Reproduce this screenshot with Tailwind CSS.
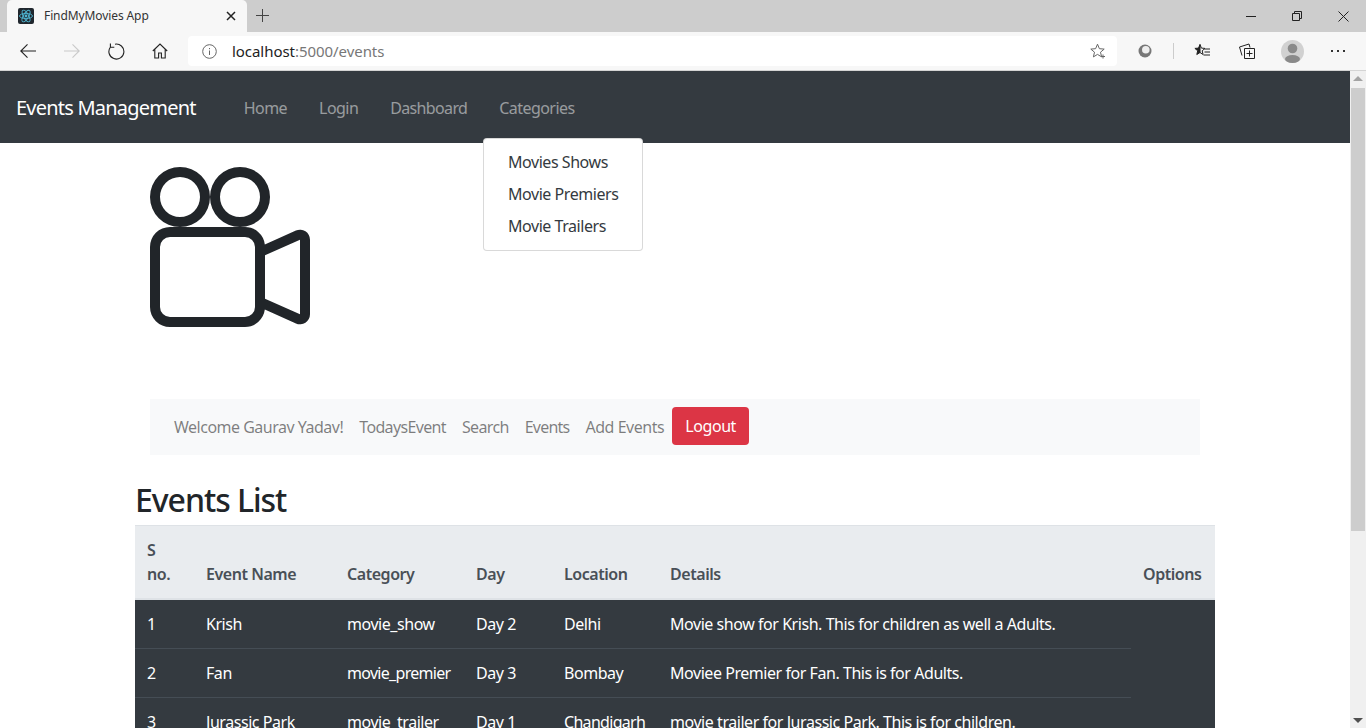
<!DOCTYPE html>
<html lang="en">
<head>
  <meta charset="UTF-8" />
  <title>FindMyMovies App</title>
  <script src="https://cdn.jsdelivr.net/npm/@tailwindcss/browser@4"></script>
</head>
<body class="h-[728px] w-[1366px] overflow-hidden bg-white font-['Noto_Sans','Open_Sans',sans-serif] text-[16px] text-[#212529]">

  <!-- browser tabs -->
  <div class="flex h-8 items-end bg-[#cdcdcd] pl-[7px]">
    <div class="flex h-8 w-[240px] items-center rounded-t-[5px] bg-[#f7f7f7] pl-[11px] pr-[11px]">
      <svg class="h-4 w-4 shrink-0" viewBox="0 0 16 16">
        <rect width="16" height="16" rx="2" fill="#20272e"/>
        <g fill="none" stroke="#4fb6d2" stroke-width="0.9">
          <ellipse cx="8" cy="8" rx="6.5" ry="2.6"/>
          <ellipse cx="8" cy="8" rx="6.5" ry="2.6" transform="rotate(60 8 8)"/>
          <ellipse cx="8" cy="8" rx="6.5" ry="2.6" transform="rotate(120 8 8)"/>
        </g>
        <circle cx="8" cy="8" r="1.4" fill="#4fb6d2"/>
      </svg>
      <span class="ml-[10px] text-[12px] tracking-[-0.1px] text-[#333]">FindMyMovies App</span>
      <svg class="ml-auto h-[10px] w-[10px]" viewBox="0 0 10 10" fill="none" stroke="#222" stroke-width="1.5"><path d="M1 1l8 8M9 1l-8 8"/></svg>
    </div>
    <svg class="mb-[10px] ml-[9px] h-[13px] w-[13px]" viewBox="0 0 13 13" fill="none" stroke="#444" stroke-width="1"><path d="M6.5 0v13M0 6.5h13"/></svg>
    <div class="ml-auto flex h-8 items-center">
      <div class="flex w-[46px] justify-center"><svg class="h-[10px] w-[10px]" viewBox="0 0 10 10" fill="none" stroke="#222"><path d="M0 5.5h10"/></svg></div>
      <div class="flex w-[46px] justify-center"><svg class="h-[10px] w-[10px]" viewBox="0 0 10 10" fill="none" stroke="#222"><path d="M.5 2.5h7v7h-7zM2.5 2.5v-2h7v7h-2"/></svg></div>
      <div class="flex w-[46px] justify-center"><svg class="h-[11px] w-[11px]" viewBox="0 0 11 11" fill="none" stroke="#222"><path d="M.5.5l10 10M10.5.5l-10 10"/></svg></div>
    </div>
  </div>

  <!-- browser toolbar -->
  <div class="flex h-[39px] items-center border-b border-[#d4d4d4] bg-[#f7f7f7]">
    <div class="flex w-[188px] items-center">
      <svg class="ml-[20px] h-4 w-4" viewBox="0 0 16 16" fill="none" stroke="#222" stroke-width="1.1"><path d="M16 8H.8M7.500 1.300L.8 8l6.700 6.700"/></svg>
      <svg class="ml-[28px] h-4 w-4" viewBox="0 0 16 16" fill="none" stroke="#c9c9c9" stroke-width="1.1"><path d="M0 8h15.200M8.500 1.300L15.200 8l-6.700 6.700"/></svg>
      <svg class="ml-[28px] h-[17px] w-[17px]" viewBox="0 0 17 17" fill="none" stroke="#222" stroke-width="1.1"><path d="M7 1.200A7.500 7.500 0 1 1 2.300 4.200M2.400 .4v3.900h3.900"/></svg>
      <svg class="ml-[27px] h-4 w-4" viewBox="0 0 16 16" fill="none" stroke="#222" stroke-width="1.100"><path d="M.8 8L8 1l7.200 7M2.800 6.500v8.500h3.800v-5h2.800v5h3.800V6.500"/></svg>
    </div>
    <div class="flex h-[30px] w-[929px] items-center rounded-[4px] bg-white pl-[14px]">
      <svg class="h-[15px] w-[15px]" viewBox="0 0 15 15" fill="none" stroke="#666"><circle cx="7.500" cy="7.500" r="6.800"/><path d="M7.500 6.500v4.500M7.500 4v1.200"/></svg>
      <span class="ml-[15px] text-[15px] tracking-[-0.05px] text-[#222]">localhost<span class="text-[#777]">:5000/events</span></span>
      <svg class="ml-auto mr-[11px] h-4 w-4" viewBox="0 0 16 16" fill="none" stroke="#666"><path d="M7.500 1.200l1.900 4.500 4.800.4-3.700 3.100 1.100 4.700-4.100-2.500-4.100 2.500 1.100-4.700L.8 6.100l4.800-.4zM13 11.500v4M11 13.500h4"/></svg>
    </div>
    <div class="flex flex-1 items-center">
      <svg class="ml-[21px] h-[14px] w-[14px]" viewBox="0 0 14 14"><circle cx="7" cy="7" r="6.500" fill="#777"/><circle cx="7.800" cy="5.800" r="3.800" fill="#eee"/></svg>
      <div class="ml-[21px] h-4 w-px bg-[#ccc]"></div>
      <svg class="ml-[20px] h-4 w-4" viewBox="0 0 16 16" fill="none" stroke="#222"><path d="M6 1.500L4.500 5.100.9 5.400l2.800 2.400-.9 3.700L6 9.500z" fill="#222"/><path d="M6 1.500l1.400 3.600 3.600.3-2.800 2.400.9 3.700L6 9.500"/><path d="M10.500 6H16M10.500 9H16M9.500 12H16"/></svg>
      <svg class="ml-[29px] h-4 w-4" viewBox="0 0 16 16" fill="none" stroke="#222"><path d="M5.500 15.500h10v-10h-10zM10.500 7.500v6M7.500 10.500h6M3 12.500L.5 4l9.500-3 1 3.500"/></svg>
      <svg class="ml-[26px] h-[23px] w-[23px]" viewBox="0 0 23 23"><circle cx="11.500" cy="11.500" r="11.500" fill="#d1d1d1"/><circle cx="11.500" cy="8.500" r="4.800" fill="#8a8a8a"/><ellipse cx="11.500" cy="19" rx="7.500" ry="4" fill="#8a8a8a"/></svg>
      <span class="ml-[27px] flex gap-[4px]"><i class="h-[2px] w-[2px] bg-[#333]"></i><i class="h-[2px] w-[2px] bg-[#333]"></i><i class="h-[2px] w-[2px] bg-[#333]"></i></span>
    </div>
  </div>

  <div class="flex h-[657px]">
    <!-- page -->
    <div class="relative w-[1350px] overflow-hidden">
      <nav class="flex h-[72px] items-center bg-[#343a40] pl-4 pt-[2px]">
        <span class="mr-[40px] text-[20px] tracking-[-0.78px] text-white">Events Management</span>
        <a class="px-2 tracking-[-0.55px] text-white/50">Home</a>
        <a class="ml-4 px-2 tracking-[-0.55px] text-white/50">Login</a>
        <a class="ml-4 px-2 tracking-[-0.65px] text-white/50">Dashboard</a>
        <a class="ml-4 px-2 tracking-[-0.55px] text-white/50">Categories</a>
      </nav>

      <!-- categories dropdown -->
      <div class="absolute left-[483px] top-[67px] z-10 w-[160px] rounded-[4px] border border-black/15 bg-white pb-[8px] pt-[7px] tracking-[-0.45px] text-[#343a40]">
        <div class="h-8 whitespace-nowrap px-6 leading-8">Movies Shows</div>
        <div class="h-8 whitespace-nowrap px-6 leading-8">Movie Premiers</div>
        <div class="h-8 whitespace-nowrap px-6 leading-8">Movie Trailers</div>
      </div>

      <div class="mx-auto w-[1080px]">
        <div class="pl-[15px] pt-6">
          <svg class="h-[160px] w-[160px]" viewBox="0 0 16 16" fill="#212529">
            <path d="M6 3a3 3 0 1 1-6 0 3 3 0 0 1 6 0zM1 3a2 2 0 1 0 4 0 2 2 0 0 0-4 0z"/>
            <path d="M9 6h.5a2 2 0 0 1 1.983 1.738l3.11-1.382A1 1 0 0 1 16 7.269v7.462a1 1 0 0 1-1.406.913l-3.111-1.382A2 2 0 0 1 9.5 16H2a2 2 0 0 1-2-2V8a2 2 0 0 1 2-2h7zm6 8.73V7.27l-3.5 1.555v4.35l3.5 1.556zM1 8v6a1 1 0 0 0 1 1h7.5a1 1 0 0 0 1-1V8a1 1 0 0 0-1-1H2a1 1 0 0 0-1 1z"/>
            <path d="M9 6a3 3 0 1 0 0-6 3 3 0 0 0 0 6zM7 3a2 2 0 1 1 4 0 2 2 0 0 1-4 0z"/>
          </svg>
        </div>

        <div class="mx-[15px] mt-[72px] flex h-14 items-center bg-[#f8f9fa] pl-4 text-black/50">
          <a class="px-2 tracking-[-0.5px]">Welcome Gaurav Yadav!</a>
          <a class="px-2 tracking-[-0.65px]">TodaysEvent</a>
          <a class="px-2 tracking-[-0.65px]">Search</a>
          <a class="px-2 tracking-[-0.78px]">Events</a>
          <a class="px-2 tracking-[-0.45px]">Add Events</a>
          <button class="mb-[2px] h-[38px] rounded-[4px] bg-[#dc3545] px-[13px] tracking-[-0.45px] text-white">Logout</button>
        </div>

        <h1 class="mt-[4px] h-[66px] text-[32px] font-medium leading-[81px] tracking-[-1.05px] text-[#212529]">Events List</h1>

        <table class="w-[1080px] table-fixed border-collapse tracking-[-0.45px]">
          <colgroup>
            <col class="w-[59px]" /><col class="w-[141px]" /><col class="w-[129px]" /><col class="w-[88px]" /><col class="w-[106px]" /><col class="w-[473px]" /><col class="w-[84px]" />
          </colgroup>
          <thead class="bg-[#e9ecef] text-[#495057]">
            <tr class="border-t border-b-2 border-t-[#dee2e6] border-b-[#dee2e6] text-left align-bottom leading-6">
              <th class="px-3 pb-[12px] pt-3 font-semibold">S no.</th>
              <th class="px-3 pb-[12px] font-semibold">Event Name</th>
              <th class="px-3 pb-[12px] font-semibold">Category</th>
              <th class="px-3 pb-[12px] font-semibold">Day</th>
              <th class="px-3 pb-[12px] font-semibold">Location</th>
              <th class="px-3 pb-[12px] font-semibold">Details</th>
              <th class="px-3 pb-[12px] font-semibold">Options</th>
            </tr>
          </thead>
          <tbody class="bg-[#343a40] leading-6 text-white">
            <tr class="h-[49px]">
              <td class="border-b border-[#454d55] px-3">1</td>
              <td class="border-b border-[#454d55] px-3">Krish</td>
              <td class="border-b border-[#454d55] px-3">movie_show</td>
              <td class="border-b border-[#454d55] px-3">Day 2</td>
              <td class="border-b border-[#454d55] px-3">Delhi</td>
              <td class="whitespace-nowrap border-b border-[#454d55] px-3">Movie show for Krish. This for children as well a Adults.</td>
              <td rowspan="3"></td>
            </tr>
            <tr class="h-[49px]">
              <td class="border-b border-[#454d55] px-3">2</td>
              <td class="border-b border-[#454d55] px-3">Fan</td>
              <td class="whitespace-nowrap border-b border-[#454d55] px-3 tracking-[-0.7px]">movie_premier</td>
              <td class="border-b border-[#454d55] px-3">Day 3</td>
              <td class="border-b border-[#454d55] px-3">Bombay</td>
              <td class="whitespace-nowrap border-b border-[#454d55] px-3">Moviee Premier for Fan. This is for Adults.</td>
            </tr>
            <tr class="h-[49px]">
              <td class="px-3">3</td>
              <td class="px-3">Jurassic Park</td>
              <td class="px-3">movie_trailer</td>
              <td class="px-3">Day 1</td>
              <td class="px-3 tracking-[-0.7px]">Chandigarh</td>
              <td class="whitespace-nowrap px-3">movie trailer for Jurassic Park. This is for children.</td>
            </tr>
          </tbody>
        </table>
      </div>
    </div>

    <!-- scrollbar -->
    <div class="flex w-4 flex-col items-center bg-[#f0f0f0]">
      <div class="mt-[5px] h-0 w-0 border-x-[5px] border-b-[5px] border-x-transparent border-b-[#a3a3a3]"></div>
      <div class="mt-[7px] h-[443px] w-[14px] bg-[#cdcdcd]"></div>
      <div class="mb-[5px] mt-auto h-0 w-0 border-x-[5px] border-t-[5px] border-x-transparent border-t-[#505050]"></div>
    </div>
  </div>

</body>
</html>
